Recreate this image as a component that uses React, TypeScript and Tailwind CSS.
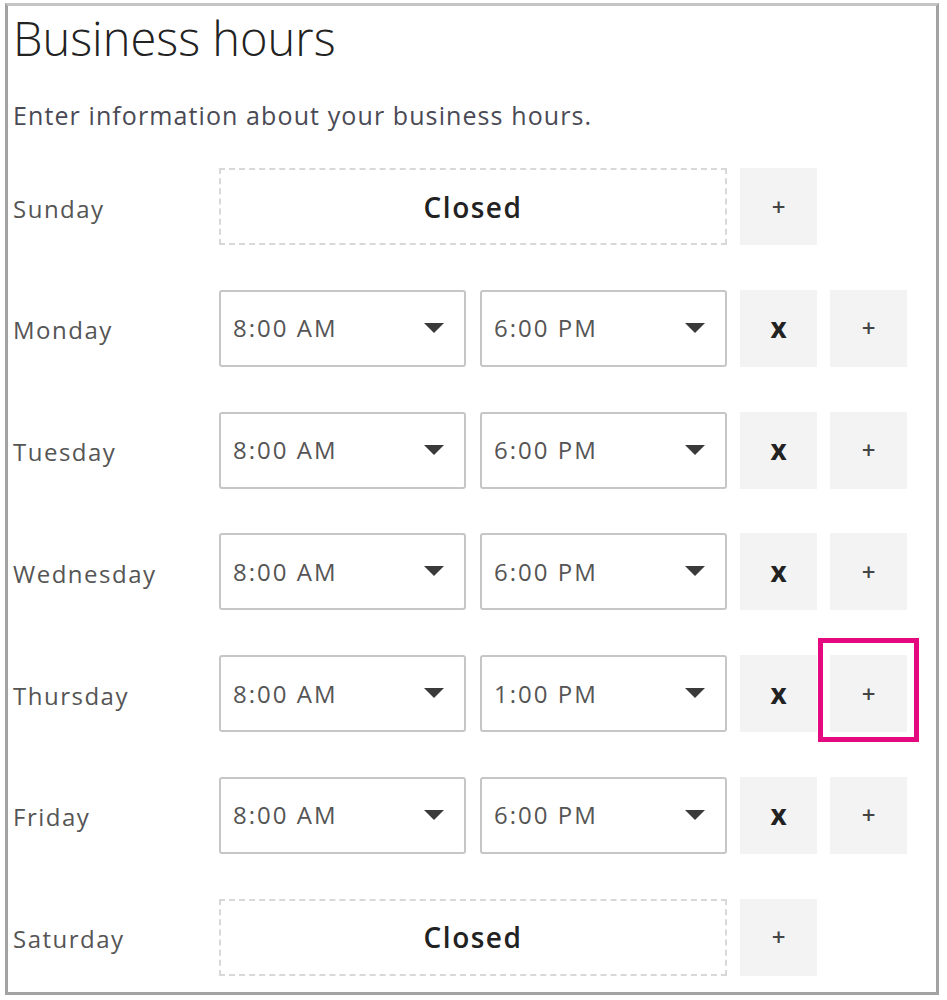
import React from "react";

const font = { fontFamily: '"Open Sans", "Noto Sans", sans-serif' };

function Select({ value }: { value: string }) {
  return (
    <div className="w-[247px] h-[77px] border-2 border-[#c6c6c6] rounded-[3px] flex items-center justify-between pl-[12px] pr-[20px] bg-white">
      <span className="text-[24px] text-[#555] tracking-[2px]">{value}</span>
      <svg width="20" height="11" viewBox="0 0 20 11">
        <polygon points="0,0 20,0 10,10" fill="#3a3a3a" />
      </svg>
    </div>
  );
}

function Btn({ children, big }: { children: React.ReactNode; big?: boolean }) {
  return (
    <div className="w-[77px] h-[77px] bg-[#f3f3f3] flex items-center justify-center">
      {big ? (
        <span className="text-[28px] font-bold text-[#222] leading-none -mt-[2px]">{children}</span>
      ) : (
        <span className="text-[24px] font-semibold text-[#444] leading-none">{children}</span>
      )}
    </div>
  );
}

type Row = { day: string; open?: string; close?: string; highlight?: boolean };

const rows: Row[] = [
  { day: "Sunday" },
  { day: "Monday", open: "8:00 AM", close: "6:00 PM" },
  { day: "Tuesday", open: "8:00 AM", close: "6:00 PM" },
  { day: "Wednesday", open: "8:00 AM", close: "6:00 PM" },
  { day: "Thursday", open: "8:00 AM", close: "1:00 PM", highlight: true },
  { day: "Friday", open: "8:00 AM", close: "6:00 PM" },
  { day: "Saturday" },
];

export default function App() {
  return (
    <div className="w-[947px] h-[1000px] bg-white pt-[3px] pl-[5px]" style={font}>
      <div className="w-[934px] h-[992px] border-[3px] border-[#a3a3a3] border-t-[#c4c4c4] pl-[5px] pt-[2px]">
        <h1 className="text-[47px] font-light text-[#222] leading-[60px] tracking-[0px]">Business hours</h1>
        <p className="mt-[32px] text-[25px] text-[#4a4a55] leading-[30px] tracking-[1.1px]">
          Enter information about your business hours.
        </p>
        <div className="mt-[38px] flex flex-col gap-[44.8px]">
          {rows.map((r) => (
            <div key={r.day} className="flex items-center h-[77px]">
              <div className="w-[206px] text-[24px] text-[#555] tracking-[1.5px] pt-[4px]">{r.day}</div>
              {r.open ? (
                <>
                  <Select value={r.open} />
                  <div className="w-[14px]" />
                  <Select value={r.close!} />
                  <div className="w-[13px]" />
                  <Btn big>x</Btn>
                  <div className="w-[13px]" />
                  {r.highlight ? (
                    <div className="relative">
                      <Btn>+</Btn>
                      <div className="absolute -left-[12px] -top-[17px] w-[101px] h-[104px] border-[5px] border-[#e5097f]" />
                    </div>
                  ) : (
                    <Btn>+</Btn>
                  )}
                </>
              ) : (
                <>
                  <div className="w-[508px] h-[77px] border-2 border-dashed border-[#d8d8d8] flex items-center justify-center">
                    <span className="text-[28px] font-semibold text-[#222] tracking-[1.5px]">Closed</span>
                  </div>
                  <div className="w-[13px]" />
                  <Btn>+</Btn>
                </>
              )}
            </div>
          ))}
        </div>
      </div>
    </div>
  );
}
